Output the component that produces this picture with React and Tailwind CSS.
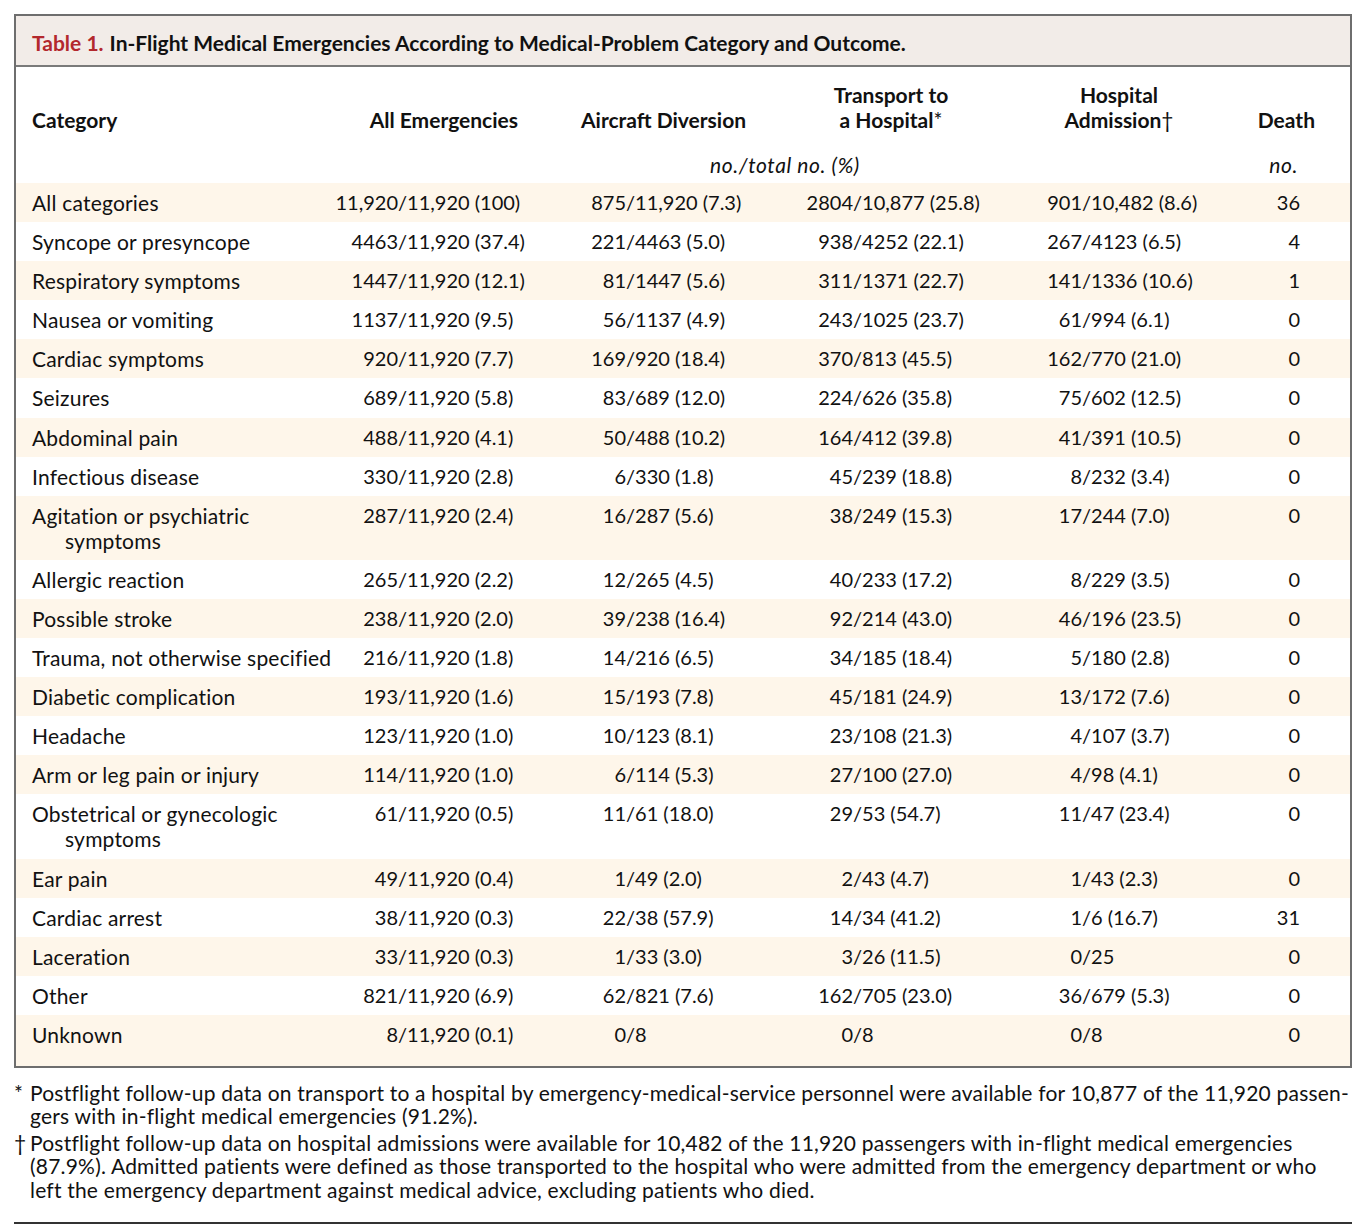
import React from "react";

const rows = [
  ["All categories", "11,920/11,920 (100)", "875/11,920 (7.3)", "2804/10,877 (25.8)", "901/10,482 (8.6)", "36"],
  ["Syncope or presyncope", "4463/11,920 (37.4)", "221/4463 (5.0)", "938/4252 (22.1)", "267/4123 (6.5)", "4"],
  ["Respiratory symptoms", "1447/11,920 (12.1)", "81/1447 (5.6)", "311/1371 (22.7)", "141/1336 (10.6)", "1"],
  ["Nausea or vomiting", "1137/11,920 (9.5)", "56/1137 (4.9)", "243/1025 (23.7)", "61/994 (6.1)", "0"],
  ["Cardiac symptoms", "920/11,920 (7.7)", "169/920 (18.4)", "370/813 (45.5)", "162/770 (21.0)", "0"],
  ["Seizures", "689/11,920 (5.8)", "83/689 (12.0)", "224/626 (35.8)", "75/602 (12.5)", "0"],
  ["Abdominal pain", "488/11,920 (4.1)", "50/488 (10.2)", "164/412 (39.8)", "41/391 (10.5)", "0"],
  ["Infectious disease", "330/11,920 (2.8)", "6/330 (1.8)", "45/239 (18.8)", "8/232 (3.4)", "0"],
  [["Agitation or psychiatric", "symptoms"], "287/11,920 (2.4)", "16/287 (5.6)", "38/249 (15.3)", "17/244 (7.0)", "0"],
  ["Allergic reaction", "265/11,920 (2.2)", "12/265 (4.5)", "40/233 (17.2)", "8/229 (3.5)", "0"],
  ["Possible stroke", "238/11,920 (2.0)", "39/238 (16.4)", "92/214 (43.0)", "46/196 (23.5)", "0"],
  ["Trauma, not otherwise specified", "216/11,920 (1.8)", "14/216 (6.5)", "34/185 (18.4)", "5/180 (2.8)", "0"],
  ["Diabetic complication", "193/11,920 (1.6)", "15/193 (7.8)", "45/181 (24.9)", "13/172 (7.6)", "0"],
  ["Headache", "123/11,920 (1.0)", "10/123 (8.1)", "23/108 (21.3)", "4/107 (3.7)", "0"],
  ["Arm or leg pain or injury", "114/11,920 (1.0)", "6/114 (5.3)", "27/100 (27.0)", "4/98 (4.1)", "0"],
  [["Obstetrical or gynecologic", "symptoms"], "61/11,920 (0.5)", "11/61 (18.0)", "29/53 (54.7)", "11/47 (23.4)", "0"],
  ["Ear pain", "49/11,920 (0.4)", "1/49 (2.0)", "2/43 (4.7)", "1/43 (2.3)", "0"],
  ["Cardiac arrest", "38/11,920 (0.3)", "22/38 (57.9)", "14/34 (41.2)", "1/6 (16.7)", "31"],
  ["Laceration", "33/11,920 (0.3)", "1/33 (3.0)", "3/26 (11.5)", "0/25", "0"],
  ["Other", "821/11,920 (6.9)", "62/821 (7.6)", "162/705 (23.0)", "36/679 (5.3)", "0"],
  ["Unknown", "8/11,920 (0.1)", "0/8", "0/8", "0/8", "0"],
];

// numbers line up on the slash
function Frac({ v, cls, num }) {
  const i = v.indexOf("/");
  return (
    <div className={"flex " + cls}>
      <span className={num + " text-right"}>{v.slice(0, i)}</span>
      <span>{v.slice(i)}</span>
    </div>
  );
}

export default function App() {
  return (
    <div className="min-h-screen bg-white pl-[14px] pt-[14px] text-[20px] text-[#111] font-['Lato',sans-serif]">
      <div className="w-[1338px] border-2 border-[#6e6e6e]">
        <div className="h-[51px] flex items-center pl-4 pt-[4px] bg-[#f2ece8] border-b-2 border-[#7a7a7a] text-[21px] font-bold">
          <span className="text-[#b3282d]">Table 1.</span>
          <span className="ml-[6px]">In-Flight Medical Emergencies According to Medical-Problem Category and Outcome.</span>
        </div>

        <div className="pt-[15px] pl-4 font-bold text-[21px] leading-[25px]">
          <div className="flex items-end">
            <div className="w-[302px]">Category</div>
            <div className="w-[230px] text-right pr-[46px]">All Emergencies</div>
            <div className="w-[220px] pl-[17px]">Aircraft Diversion</div>
            <div className="w-[230px] text-center pr-[16px]">
              Transport to
              <br />
              a Hospital<span className="font-normal">*</span>
            </div>
            <div className="w-[206px] text-center pl-[4px]">
              Hospital
              <br />
              Admission<span className="font-normal">†</span>
            </div>
            <div className="w-[100px] text-right pr-[5px]">Death</div>
          </div>
        </div>
        <div className="flex pl-4 mt-[20px] mb-[6px] italic text-[21px] tracking-[0.6px] leading-[25px]">
          <div className="w-[528px]" />
          <div className="w-[450px] text-center">no./total no. (%)</div>
          <div className="w-[210px]" />
          <div className="w-[100px] text-right pr-[22px]">no.</div>
        </div>

        <div>
          {rows.map((r, idx) => (
            <div
              key={idx}
              className={
                "flex pl-4 pt-[7px] leading-[25px] " +
                (idx % 2 === 0 ? "bg-[#fef6ea] " : "bg-white ") +
                (idx === rows.length - 1 ? "pb-[19px]" : "pb-[7.1px]")
              }
            >
              <div className="w-[302px] text-[21px] tracking-[0.2px]">
                {Array.isArray(r[0]) ? (
                  <>
                    <div>{r[0][0]}</div>
                    <div className="pl-[33px]">{r[0][1]}</div>
                  </>
                ) : (
                  r[0]
                )}
              </div>
              <Frac v={r[1]} cls="w-[230px]" num="w-[64px]" />
              <Frac v={r[2]} cls="w-[220px]" num="w-[62px]" />
              <Frac v={r[3]} cls="w-[230px]" num="w-[69px]" />
              <Frac v={r[4]} cls="w-[206px]" num="w-[68px]" />
              <div className="w-[100px] text-right pr-[20px]">{r[5]}</div>
            </div>
          ))}
        </div>
      </div>

      <div className="w-[1338px] mt-[13px] text-[21px] tracking-[0.2px] leading-[23.5px] whitespace-nowrap">
        <div className="flex">
          <span className="w-[16px] shrink-0">*</span>
          <p>
            Postflight follow-up data on transport to a hospital by emergency-medical-service personnel were available for 10,877 of the 11,920 passen-
            <br />
            gers with in-flight medical emergencies (91.2%).
          </p>
        </div>
        <div className="flex mt-[3px]">
          <span className="w-[16px] shrink-0">†</span>
          <p>
            Postflight follow-up data on hospital admissions were available for 10,482 of the 11,920 passengers with in-flight medical emergencies
            <br />
            (87.9%). Admitted patients were defined as those transported to the hospital who were admitted from the emergency department or who
            <br />
            left the emergency department against medical advice, excluding patients who died.
          </p>
        </div>
        <div className="mt-[21px] border-b-2 border-[#333]" />
      </div>
    </div>
  );
}
